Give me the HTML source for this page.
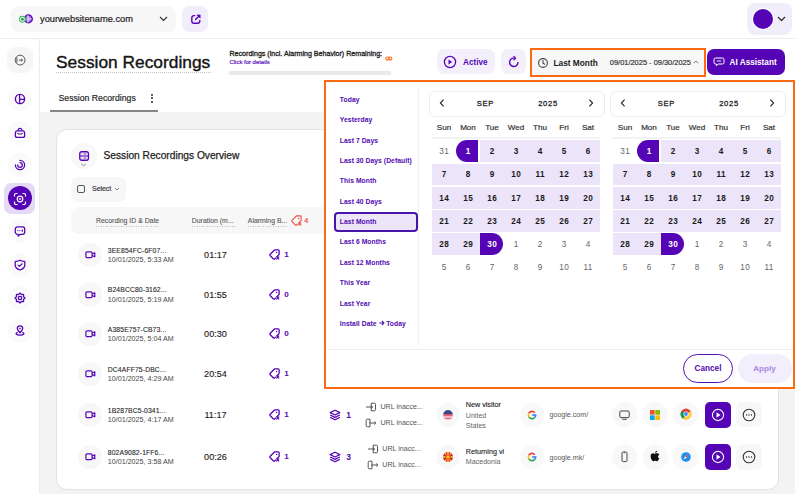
<!DOCTYPE html>
<html><head><meta charset="utf-8"><style>
html,body{margin:0;padding:0;}
body{width:795px;height:494px;overflow:hidden;position:relative;background:#fff;font-family:"Liberation Sans", sans-serif;}
</style></head><body>
<div style="position:absolute;left:0px;top:37.8px;width:795px;height:1px;background:#ebebeb"></div>
<div style="position:absolute;left:11px;top:6px;width:165px;height:26px;background:#f7f7f8;border-radius:8px"></div>
<svg style="position:absolute;left:17px;top:13px;" width="18" height="12" viewBox="0 0 18 12"><circle cx="11.4" cy="5.9" r="3.8" fill="#a678e8" stroke="#5605b6" stroke-width="1.5"/><line x1="11" y1="2.2" x2="11" y2="9.6" stroke="#fff" stroke-width="0.9"/><line x1="11" y1="5.9" x2="14.6" y2="5.9" stroke="#fff" stroke-width="0.8"/><circle cx="5.4" cy="6.3" r="2.9" fill="#fff" stroke="#3cc26a" stroke-width="1.1"/><circle cx="5.4" cy="6.3" r="1.35" fill="#1f8f45"/></svg>
<div style="position:absolute;left:40px;top:9.0px;line-height:20px;font-size:9.3px;font-weight:400;color:#222;white-space:nowrap;;-webkit-text-stroke:0.2px #222">yourwebsitename.com</div>
<svg style="position:absolute;left:159px;top:16px;" width="9" height="6" viewBox="0 0 9 6"><path d="M1 1 L4.5 4.5 L8 1" fill="none" stroke="#333" stroke-width="1.2"/></svg>
<div style="position:absolute;left:182.3px;top:6px;width:26px;height:26px;background:#f2edfb;border-radius:7px"></div>
<svg style="position:absolute;left:189.5px;top:13px;" width="12" height="12" viewBox="0 0 12 12"><path d="M4.8 2.6 H4 A2.2 2.2 0 0 0 1.8 4.8 V8 A2.2 2.2 0 0 0 4 10.2 H7.6 A2.2 2.2 0 0 0 9.8 8 V7.4" fill="none" stroke="#5605b6" stroke-width="1.4" stroke-linecap="round"/><path d="M5.6 6.4 L8.8 3.2" fill="none" stroke="#5605b6" stroke-width="1.4" stroke-linecap="round"/><path d="M6.9 1.9 L10.2 1.9 L10.2 5.2 Z" fill="#5605b6" stroke="#5605b6" stroke-width="0.6" stroke-linejoin="round"/></svg>
<div style="position:absolute;left:747px;top:3px;width:45px;height:32px;background:#f2edfb;border-radius:8px"></div>
<div style="position:absolute;left:752px;top:8px;width:22px;height:22px;border-radius:50%;background:#fff"></div>
<div style="position:absolute;left:753px;top:9px;width:20px;height:20px;border-radius:50%;background:#5605b6"></div>
<svg style="position:absolute;left:777px;top:16px;" width="9" height="6" viewBox="0 0 9 6"><path d="M1 1 L4.5 4.5 L8 1" fill="none" stroke="#333" stroke-width="1.3"/></svg>
<div style="position:absolute;left:39px;top:38px;width:1px;height:456px;background:#ebebeb"></div>
<div style="position:absolute;left:7px;top:47px;width:26px;height:26px;background:#f6f6f6;border-radius:8px"></div>
<svg style="position:absolute;left:13px;top:53px;" width="14" height="14" viewBox="0 0 14 14"><circle cx="7.1" cy="7.1" r="4.9" fill="none" stroke="#555" stroke-width="1"/><line x1="3.9" y1="4.6" x2="3.9" y2="9.6" stroke="#555" stroke-width="1"/><path d="M5.9 7.1 H9.5 M8.1 5.8 L9.5 7.1 L8.1 8.4" fill="none" stroke="#555" stroke-width="1"/></svg>
<div style="position:absolute;left:8px;top:87px;width:24px;height:24px;border-radius:50%;background:#fafafa"></div>
<div style="position:absolute;left:8px;top:120.5px;width:24px;height:24px;border-radius:50%;background:#fafafa"></div>
<div style="position:absolute;left:8px;top:152.7px;width:24px;height:24px;border-radius:50%;background:#fafafa"></div>
<div style="position:absolute;left:8px;top:218.6px;width:24px;height:24px;border-radius:50%;background:#fafafa"></div>
<div style="position:absolute;left:8px;top:252.60000000000002px;width:24px;height:24px;border-radius:50%;background:#fafafa"></div>
<div style="position:absolute;left:8px;top:285.7px;width:24px;height:24px;border-radius:50%;background:#fafafa"></div>
<div style="position:absolute;left:8px;top:319px;width:24px;height:24px;border-radius:50%;background:#fafafa"></div>
<svg style="position:absolute;left:13px;top:92px;" width="14" height="14" viewBox="0 0 14 14"><circle cx="7" cy="7" r="4.6" fill="none" stroke="#5605b6" stroke-width="1.4"/><path d="M6.6 2.4 V11.6 M6.6 7.3 H11.6" fill="none" stroke="#5605b6" stroke-width="1.3"/></svg>
<svg style="position:absolute;left:13px;top:125.5px;" width="14" height="14" viewBox="0 0 14 14"><path d="M4.2 4.8 H9.8 A1.8 1.8 0 0 1 11.5 6.3 L11.7 9.4 A2 2 0 0 1 9.7 11.4 H4.3 A2 2 0 0 1 2.3 9.4 L2.5 6.3 A1.8 1.8 0 0 1 4.2 4.8 Z" fill="none" stroke="#5605b6" stroke-width="1.3" stroke-linejoin="round"/><path d="M5.2 4.8 V4.2 A1.8 1.8 0 0 1 8.8 4.2 V4.8" fill="none" stroke="#5605b6" stroke-width="1.2"/><path d="M4.8 7.4 Q7 8.6 9.2 7.4" fill="none" stroke="#5605b6" stroke-width="1.1" stroke-linecap="round"/></svg>
<svg style="position:absolute;left:13px;top:157.7px;" width="14" height="14" viewBox="0 0 14 14"><path d="M7 2.4 A4.6 4.6 0 1 1 2.4 7" fill="none" stroke="#5605b6" stroke-width="1.3" stroke-linecap="round"/><path d="M7 4.7 A2.3 2.3 0 1 1 4.7 7" fill="none" stroke="#5605b6" stroke-width="1.3" stroke-linecap="round"/></svg>
<div style="position:absolute;left:4px;top:182.5px;width:31px;height:31px;background:#e5daf6;border-radius:7px"></div>
<div style="position:absolute;left:7.600000000000001px;top:186.10000000000002px;width:24.4px;height:24.4px;border-radius:50%;background:#5605b6"></div>
<svg style="position:absolute;left:13px;top:191.5px;" width="14" height="14" viewBox="0 0 14 14"><path d="M1.5 4.5 V3 A1.5 1.5 0 0 1 3 1.5 H4.5 M9.5 1.5 H11 A1.5 1.5 0 0 1 12.5 3 V4.5 M12.5 9.5 V11 A1.5 1.5 0 0 1 11 12.5 H9.5 M4.5 12.5 H3 A1.5 1.5 0 0 1 1.5 11 V9.5" fill="none" stroke="#fff" stroke-width="1.2"/><circle cx="7" cy="7" r="2.8" fill="none" stroke="#fff" stroke-width="1.2"/><circle cx="7" cy="7" r="0.9" fill="#fff"/></svg>
<svg style="position:absolute;left:13px;top:223.6px;" width="14" height="14" viewBox="0 0 14 14"><path d="M4.5 2.8 H9.5 A2.2 2.2 0 0 1 11.7 5 V8.1 A2.2 2.2 0 0 1 9.5 10.3 H7 L5.4 12 L5 10.3 H4.5 A2.2 2.2 0 0 1 2.3 8.1 V5 A2.2 2.2 0 0 1 4.5 2.8 Z" fill="none" stroke="#5605b6" stroke-width="1.3" stroke-linejoin="round"/><circle cx="4.9" cy="6.6" r="0.65" fill="#5605b6"/><path d="M6.3 6.6 H7.5" stroke="#5605b6" stroke-width="0.9"/><path d="M9.3 5.4 V7.8" stroke="#5605b6" stroke-width="1.2"/></svg>
<svg style="position:absolute;left:13px;top:257.6px;" width="14" height="14" viewBox="0 0 14 14"><path d="M7 2.2 C8.4 3.2 10 3.3 11.8 3.6 V7 C11.8 9.7 9.6 11.2 7 12 C4.4 11.2 2.2 9.7 2.2 7 V3.6 C4 3.3 5.6 3.2 7 2.2 Z" fill="none" stroke="#5605b6" stroke-width="1.3" stroke-linejoin="round"/><path d="M5 7.1 L6.4 8.4 L9.1 5.8" fill="none" stroke="#5605b6" stroke-width="1.2" stroke-linecap="round" stroke-linejoin="round"/></svg>
<svg style="position:absolute;left:13px;top:290.7px;" width="14" height="14" viewBox="0 0 14 14"><path d="M11.85 7.00 L11.77 7.31 L11.54 7.60 L11.22 7.84 L10.89 8.04 L10.62 8.23 L10.46 8.44 L10.43 8.69 L10.49 9.01 L10.58 9.39 L10.63 9.79 L10.59 10.15 L10.43 10.43 L10.15 10.59 L9.79 10.63 L9.39 10.58 L9.01 10.49 L8.69 10.43 L8.44 10.46 L8.23 10.62 L8.04 10.89 L7.84 11.22 L7.60 11.54 L7.31 11.77 L7.00 11.85 L6.69 11.77 L6.40 11.54 L6.16 11.22 L5.96 10.89 L5.77 10.62 L5.56 10.46 L5.31 10.43 L4.99 10.49 L4.61 10.58 L4.21 10.63 L3.85 10.59 L3.57 10.43 L3.41 10.15 L3.37 9.79 L3.42 9.39 L3.51 9.01 L3.57 8.69 L3.54 8.44 L3.38 8.23 L3.11 8.04 L2.78 7.84 L2.46 7.60 L2.23 7.31 L2.15 7.00 L2.23 6.69 L2.46 6.40 L2.78 6.16 L3.11 5.96 L3.38 5.77 L3.54 5.56 L3.57 5.31 L3.51 4.99 L3.42 4.61 L3.37 4.21 L3.41 3.85 L3.57 3.57 L3.85 3.41 L4.21 3.37 L4.61 3.42 L4.99 3.51 L5.31 3.57 L5.56 3.54 L5.77 3.38 L5.96 3.11 L6.16 2.78 L6.40 2.46 L6.69 2.23 L7.00 2.15 L7.31 2.23 L7.60 2.46 L7.84 2.78 L8.04 3.11 L8.23 3.38 L8.44 3.54 L8.69 3.57 L9.01 3.51 L9.39 3.42 L9.79 3.37 L10.15 3.41 L10.43 3.57 L10.59 3.85 L10.63 4.21 L10.58 4.61 L10.49 4.99 L10.43 5.31 L10.46 5.56 L10.62 5.77 L10.89 5.96 L11.22 6.16 L11.54 6.40 L11.77 6.69 L11.85 7.00 Z" fill="none" stroke="#5605b6" stroke-width="1.3" stroke-linejoin="round"/><circle cx="7" cy="7" r="1.7" fill="none" stroke="#5605b6" stroke-width="1.3"/></svg>
<svg style="position:absolute;left:13px;top:324px;" width="14" height="14" viewBox="0 0 14 14"><path d="M7 8.8 C5.5 7.3 4.3 6 4.3 4.6 A2.7 2.7 0 0 1 9.7 4.6 C9.7 6 8.5 7.3 7 8.8 Z" fill="none" stroke="#5605b6" stroke-width="1.3" stroke-linejoin="round"/><circle cx="7" cy="4.6" r="0.8" fill="#5605b6"/><path d="M4.2 8.6 C2.4 9.3 2.6 11.2 7 11.2 C11.4 11.2 11.6 9.3 9.8 8.6" fill="none" stroke="#5605b6" stroke-width="1.3" stroke-linecap="round"/></svg>
<div style="position:absolute;left:56px;top:52.4px;line-height:20px;font-size:17.35px;font-weight:400;color:#141414;white-space:nowrap;;-webkit-text-stroke:0.38px #141414">Session Recordings</div>
<div style="position:absolute;left:56px;top:71.5px;width:155px;height:1px;background-image:linear-gradient(to right,#c4c4c4 50%,transparent 50%);background-size:2px 1px"></div>
<div style="position:absolute;left:229.5px;top:44.1px;line-height:20px;font-size:7.1px;font-weight:400;color:#1e1e1e;white-space:nowrap;;-webkit-text-stroke:0.3px #1e1e1e">Recordings (incl. Alarming Behavior) Remaining:</div>
<div style="position:absolute;left:229.5px;top:52.2px;line-height:20px;font-size:5.95px;font-weight:400;color:#5a14c0;white-space:nowrap;;-webkit-text-stroke:0.2px #5a14c0">Click for details</div>
<div style="position:absolute;left:229px;top:71.2px;width:162px;height:4.2px;background:#e9e9e9;border-radius:1px"></div>
<svg style="position:absolute;left:384.5px;top:55.5px;" width="8" height="5" viewBox="0 0 8 5"><circle cx="2.4" cy="2.6" r="1.55" fill="none" stroke="#fb6a12" stroke-width="1.1"/><circle cx="5.3" cy="2.6" r="1.55" fill="none" stroke="#fb6a12" stroke-width="1.1"/></svg>
<div style="position:absolute;left:437px;top:49px;width:58px;height:25px;background:#f3effb;border-radius:7px"></div>
<svg style="position:absolute;left:443.2px;top:55px;" width="14" height="14" viewBox="0 0 14 14"><circle cx="7" cy="7" r="5.6" fill="none" stroke="#5605b6" stroke-width="1.3"/><path d="M5.5 4.6 L9.2 7 L5.5 9.4 Z" fill="#5605b6"/></svg>
<div style="position:absolute;left:463px;top:52.8px;line-height:20px;font-size:8.2px;font-weight:700;color:#5209b3;white-space:nowrap;">Active</div>
<div style="position:absolute;left:501px;top:49px;width:25px;height:25px;background:#f3effb;border-radius:7px"></div>
<svg style="position:absolute;left:507px;top:55px;" width="14" height="14" viewBox="0 0 14 14"><path d="M11 7.5 A4.2 4.2 0 1 1 7.2 3.1" fill="none" stroke="#5605b6" stroke-width="1.4" stroke-linecap="round"/><path d="M6.8 1.4 L8.6 3.1 L6.9 4.9" fill="none" stroke="#5605b6" stroke-width="1.3" stroke-linecap="round" stroke-linejoin="round"/></svg>
<div style="position:absolute;left:529.5px;top:48px;width:176px;height:28.8px;box-sizing:border-box;background:#f7f7f7;border:2.9px solid #fb6a12"></div>
<svg style="position:absolute;left:536px;top:55.5px;" width="14" height="14" viewBox="0 0 14 14"><circle cx="7" cy="7" r="4.4" fill="none" stroke="#444" stroke-width="1.1"/><path d="M7 4.6 V7.2 L8.7 8.2" fill="none" stroke="#444" stroke-width="1.1" stroke-linecap="round"/></svg>
<div style="position:absolute;left:553.5px;top:52.8px;line-height:20px;font-size:8.3px;font-weight:700;color:#1a1a1a;white-space:nowrap;">Last Month</div>
<div style="position:absolute;left:609.8px;top:53.0px;line-height:20px;font-size:7.45px;font-weight:400;color:#2a2a2a;white-space:nowrap;;-webkit-text-stroke:0.15px #2a2a2a">09/01/2025 - 09/30/2025</div>
<svg style="position:absolute;left:693px;top:60px;" width="6" height="4" viewBox="0 0 6 4"><path d="M0.8 3.2 L3 1 L5.2 3.2" fill="none" stroke="#555" stroke-width="0.8"/></svg>
<div style="position:absolute;left:707px;top:49px;width:78px;height:26px;background:#5605b6;border-radius:7px"></div>
<svg style="position:absolute;left:713px;top:57px;" width="12" height="10" viewBox="0 0 12 10"><path d="M2.6 1 H9.4 A1.6 1.6 0 0 1 11 2.6 V5.4 A1.6 1.6 0 0 1 9.4 7 H5.2 L3.4 8.8 V7 H2.6 A1.6 1.6 0 0 1 1 5.4 V2.6 A1.6 1.6 0 0 1 2.6 1 Z" fill="none" stroke="#fff" stroke-width="1" stroke-linejoin="round"/><path d="M3.8 4 H8.2" stroke="#fff" stroke-width="0.9"/></svg>
<div style="position:absolute;left:729.6px;top:53.0px;line-height:20px;font-size:8.2px;font-weight:700;color:#fff;white-space:nowrap;">AI Assistant</div>
<div style="position:absolute;left:58.5px;top:88.0px;line-height:20px;font-size:8.7px;font-weight:400;color:#2a2a2a;white-space:nowrap;;-webkit-text-stroke:0.2px #2a2a2a">Session Recordings</div>
<div style="position:absolute;left:150.85000000000002px;top:93.75px;width:1.9px;height:1.9px;border-radius:50%;background:#2a2a2a"></div>
<div style="position:absolute;left:150.85000000000002px;top:97.35px;width:1.9px;height:1.9px;border-radius:50%;background:#2a2a2a"></div>
<div style="position:absolute;left:150.85000000000002px;top:100.94999999999999px;width:1.9px;height:1.9px;border-radius:50%;background:#2a2a2a"></div>
<div style="position:absolute;left:50px;top:110.2px;width:108px;height:1.9px;background:#858585"></div>
<div style="position:absolute;left:40px;top:111.8px;width:755px;height:382.2px;background:#f3f3f3"></div>
<div style="position:absolute;left:55.9px;top:129.4px;width:723.3px;height:360.2px;box-sizing:border-box;background:#fff;border:1px solid #e3e3e3;border-radius:11px"></div>
<div style="position:absolute;left:71.0px;top:143.2px;width:25.6px;height:25.6px;border-radius:50%;background:#f8f8f8"></div>
<svg style="position:absolute;left:78.6px;top:150.6px;" width="11" height="11" viewBox="0 0 11 11"><rect x="0.75" y="0.75" width="8.7" height="8.5" rx="1.9" fill="none" stroke="#5605b6" stroke-width="1.3"/><line x1="0.75" y1="5" x2="9.45" y2="5" stroke="#5605b6" stroke-width="1.1"/><path d="M2.6 2.9 H3.3 M4.6 2.9 H7.4 M2.6 7.1 H3.3 M4.6 7.1 H7.4" stroke="#5605b6" stroke-width="0.8"/></svg>
<svg style="position:absolute;left:80.3px;top:162.5px;" width="7" height="4" viewBox="0 0 7 4"><path d="M1 0.8 L3.5 3 L6 0.8" fill="none" stroke="#777" stroke-width="0.8"/></svg>
<div style="position:absolute;left:103.5px;top:145.8px;line-height:20px;font-size:10.2px;font-weight:400;color:#1e1e1e;white-space:nowrap;;-webkit-text-stroke:0.25px #1e1e1e">Session Recordings Overview</div>
<div style="position:absolute;left:71px;top:176.5px;width:55px;height:25px;background:#f7f7f7;border-radius:7px"></div>
<div style="position:absolute;left:77.2px;top:185px;width:8.2px;height:8.2px;box-sizing:border-box;border:1.3px solid #555;border-radius:2px"></div>
<div style="position:absolute;left:92px;top:179.0px;line-height:20px;font-size:7.1px;font-weight:400;color:#3a3a3a;white-space:nowrap;letter-spacing:-0.1px;-webkit-text-stroke:0.18px #3a3a3a">Select</div>
<svg style="position:absolute;left:113.8px;top:186.6px;" width="6" height="4" viewBox="0 0 6 4"><path d="M1 1 L3 3 L5 1" fill="none" stroke="#666" stroke-width="0.8"/></svg>
<div style="position:absolute;left:71px;top:207px;width:720px;height:27px;background:#f7f7f7;border-radius:8px"></div>
<div style="position:absolute;left:96px;top:210.9px;line-height:20px;font-size:6.9px;font-weight:400;color:#555;white-space:nowrap;;-webkit-text-stroke:0.1px #555">Recording ID &amp; Date</div>
<div style="position:absolute;left:96px;top:225.6px;width:63px;height:1px;background-image:linear-gradient(to right,#b0b0b0 50%,transparent 50%);background-size:2.5px 1px"></div>
<div style="position:absolute;left:191.8px;top:210.9px;line-height:20px;font-size:6.9px;font-weight:400;color:#555;white-space:nowrap;;-webkit-text-stroke:0.1px #555">Duration (m...</div>
<div style="position:absolute;left:191.8px;top:225.6px;width:45.5px;height:1px;background-image:linear-gradient(to right,#b0b0b0 50%,transparent 50%);background-size:2.5px 1px"></div>
<div style="position:absolute;left:247.8px;top:210.9px;line-height:20px;font-size:6.9px;font-weight:400;color:#555;white-space:nowrap;;-webkit-text-stroke:0.1px #555">Alarming B...</div>
<div style="position:absolute;left:247.8px;top:225.6px;width:40px;height:1px;background-image:linear-gradient(to right,#b0b0b0 50%,transparent 50%);background-size:2.5px 1px"></div>
<svg style="position:absolute;left:291.2px;top:214.7px;" width="12" height="12" viewBox="0 0 12 12"><g transform="scale(0.46)"><path d="M11.414 2.586 A2 2 0 0 1 12.828 2 H20 A2 2 0 0 1 22 4 V11.172 A2 2 0 0 1 21.414 12.586 L17.5 16.5 M14 20 L12.71 21.29 A2.426 2.426 0 0 1 9.29 21.29 L2.71 14.71 A2.426 2.426 0 0 1 2.71 11.29 L11.414 2.586" fill="none" stroke="#ef4a45" stroke-width="2.4" stroke-linejoin="round" stroke-linecap="round"/><circle cx="16.5" cy="7.5" r="1.6" fill="#ef4a45"/><path d="M16.5 17 L21.5 22 M21.5 17 L16.5 22" stroke="#ef4a45" stroke-width="2.3" stroke-linecap="round"/></g></svg>
<div style="position:absolute;left:304.3px;top:210.6px;line-height:20px;font-size:7.4px;font-weight:400;color:#ef4a45;white-space:nowrap;;-webkit-text-stroke:0.2px #ef4a45">4</div>
<div style="position:absolute;left:77.5px;top:242.7px;width:24.6px;height:24.6px;border-radius:50%;background:#f7f7f7"></div>
<svg style="position:absolute;left:84.8px;top:251.4px;" width="11" height="8" viewBox="0 0 11 8"><rect x="0.9" y="0.9" width="6.2" height="5.8" rx="1.2" fill="none" stroke="#5605b6" stroke-width="1.2"/><path d="M7.1 3 L9.8 1.8 V5.8 L7.1 4.6" fill="none" stroke="#5605b6" stroke-width="1.2" stroke-linejoin="round"/></svg>
<div style="position:absolute;left:107.8px;top:240.7px;line-height:20px;font-size:6.8px;font-weight:400;color:#1e1e1e;white-space:nowrap;letter-spacing:0.12px;-webkit-text-stroke:0.1px #1e1e1e">3EE854FC-6F07...</div>
<div style="position:absolute;left:107.8px;top:250.39999999999998px;line-height:20px;font-size:7.15px;font-weight:400;color:#474747;white-space:nowrap;">10/01/2025, 5:33 AM</div>
<div style="position:absolute;left:195.5px;top:245.2px;width:40px;text-align:center;line-height:20px;font-size:9.1px;font-weight:400;color:#1a1a1a;white-space:nowrap;;-webkit-text-stroke:0.12px #1a1a1a">01:17</div>
<svg style="position:absolute;left:268.5px;top:249.4px;" width="12" height="12" viewBox="0 0 12 12"><g transform="scale(0.46)"><path d="M11.414 2.586 A2 2 0 0 1 12.828 2 H20 A2 2 0 0 1 22 4 V11.172 A2 2 0 0 1 21.414 12.586 L17.5 16.5 M14 20 L12.71 21.29 A2.426 2.426 0 0 1 9.29 21.29 L2.71 14.71 A2.426 2.426 0 0 1 2.71 11.29 L11.414 2.586" fill="none" stroke="#5605b6" stroke-width="2.8" stroke-linejoin="round" stroke-linecap="round"/><circle cx="16.5" cy="7.5" r="1.6" fill="#5605b6"/><path d="M16.5 17 L21.5 22 M21.5 17 L16.5 22" stroke="#5605b6" stroke-width="2.3" stroke-linecap="round"/></g></svg>
<div style="position:absolute;left:284.3px;top:245.2px;line-height:20px;font-size:8.1px;font-weight:700;color:#5209b3;white-space:nowrap;">1</div>
<div style="position:absolute;left:77.5px;top:282.2px;width:24.6px;height:24.6px;border-radius:50%;background:#f7f7f7"></div>
<svg style="position:absolute;left:84.8px;top:290.9px;" width="11" height="8" viewBox="0 0 11 8"><rect x="0.9" y="0.9" width="6.2" height="5.8" rx="1.2" fill="none" stroke="#5605b6" stroke-width="1.2"/><path d="M7.1 3 L9.8 1.8 V5.8 L7.1 4.6" fill="none" stroke="#5605b6" stroke-width="1.2" stroke-linejoin="round"/></svg>
<div style="position:absolute;left:107.8px;top:280.2px;line-height:20px;font-size:6.8px;font-weight:400;color:#1e1e1e;white-space:nowrap;letter-spacing:0.12px;-webkit-text-stroke:0.1px #1e1e1e">B24BCC80-3162...</div>
<div style="position:absolute;left:107.8px;top:289.9px;line-height:20px;font-size:7.15px;font-weight:400;color:#474747;white-space:nowrap;">10/01/2025, 5:19 AM</div>
<div style="position:absolute;left:195.5px;top:284.7px;width:40px;text-align:center;line-height:20px;font-size:9.1px;font-weight:400;color:#1a1a1a;white-space:nowrap;;-webkit-text-stroke:0.12px #1a1a1a">01:55</div>
<svg style="position:absolute;left:268.5px;top:288.9px;" width="12" height="12" viewBox="0 0 12 12"><g transform="scale(0.46)"><path d="M11.414 2.586 A2 2 0 0 1 12.828 2 H20 A2 2 0 0 1 22 4 V11.172 A2 2 0 0 1 21.414 12.586 L17.5 16.5 M14 20 L12.71 21.29 A2.426 2.426 0 0 1 9.29 21.29 L2.71 14.71 A2.426 2.426 0 0 1 2.71 11.29 L11.414 2.586" fill="none" stroke="#5605b6" stroke-width="2.8" stroke-linejoin="round" stroke-linecap="round"/><circle cx="16.5" cy="7.5" r="1.6" fill="#5605b6"/><path d="M16.5 17 L21.5 22 M21.5 17 L16.5 22" stroke="#5605b6" stroke-width="2.3" stroke-linecap="round"/></g></svg>
<div style="position:absolute;left:284.3px;top:284.7px;line-height:20px;font-size:8.1px;font-weight:700;color:#5209b3;white-space:nowrap;">0</div>
<div style="position:absolute;left:77.5px;top:321.7px;width:24.6px;height:24.6px;border-radius:50%;background:#f7f7f7"></div>
<svg style="position:absolute;left:84.8px;top:330.4px;" width="11" height="8" viewBox="0 0 11 8"><rect x="0.9" y="0.9" width="6.2" height="5.8" rx="1.2" fill="none" stroke="#5605b6" stroke-width="1.2"/><path d="M7.1 3 L9.8 1.8 V5.8 L7.1 4.6" fill="none" stroke="#5605b6" stroke-width="1.2" stroke-linejoin="round"/></svg>
<div style="position:absolute;left:107.8px;top:319.7px;line-height:20px;font-size:6.8px;font-weight:400;color:#1e1e1e;white-space:nowrap;letter-spacing:0.12px;-webkit-text-stroke:0.1px #1e1e1e">A385E757-CB73...</div>
<div style="position:absolute;left:107.8px;top:329.4px;line-height:20px;font-size:7.15px;font-weight:400;color:#474747;white-space:nowrap;">10/01/2025, 5:04 AM</div>
<div style="position:absolute;left:195.5px;top:324.2px;width:40px;text-align:center;line-height:20px;font-size:9.1px;font-weight:400;color:#1a1a1a;white-space:nowrap;;-webkit-text-stroke:0.12px #1a1a1a">00:30</div>
<svg style="position:absolute;left:268.5px;top:328.4px;" width="12" height="12" viewBox="0 0 12 12"><g transform="scale(0.46)"><path d="M11.414 2.586 A2 2 0 0 1 12.828 2 H20 A2 2 0 0 1 22 4 V11.172 A2 2 0 0 1 21.414 12.586 L17.5 16.5 M14 20 L12.71 21.29 A2.426 2.426 0 0 1 9.29 21.29 L2.71 14.71 A2.426 2.426 0 0 1 2.71 11.29 L11.414 2.586" fill="none" stroke="#5605b6" stroke-width="2.8" stroke-linejoin="round" stroke-linecap="round"/><circle cx="16.5" cy="7.5" r="1.6" fill="#5605b6"/><path d="M16.5 17 L21.5 22 M21.5 17 L16.5 22" stroke="#5605b6" stroke-width="2.3" stroke-linecap="round"/></g></svg>
<div style="position:absolute;left:284.3px;top:324.2px;line-height:20px;font-size:8.1px;font-weight:700;color:#5209b3;white-space:nowrap;">0</div>
<div style="position:absolute;left:77.5px;top:361.7px;width:24.6px;height:24.6px;border-radius:50%;background:#f7f7f7"></div>
<svg style="position:absolute;left:84.8px;top:370.4px;" width="11" height="8" viewBox="0 0 11 8"><rect x="0.9" y="0.9" width="6.2" height="5.8" rx="1.2" fill="none" stroke="#5605b6" stroke-width="1.2"/><path d="M7.1 3 L9.8 1.8 V5.8 L7.1 4.6" fill="none" stroke="#5605b6" stroke-width="1.2" stroke-linejoin="round"/></svg>
<div style="position:absolute;left:107.8px;top:359.7px;line-height:20px;font-size:6.8px;font-weight:400;color:#1e1e1e;white-space:nowrap;letter-spacing:0.12px;-webkit-text-stroke:0.1px #1e1e1e">DC4AFF75-DBC...</div>
<div style="position:absolute;left:107.8px;top:369.4px;line-height:20px;font-size:7.15px;font-weight:400;color:#474747;white-space:nowrap;">10/01/2025, 4:29 AM</div>
<div style="position:absolute;left:195.5px;top:364.2px;width:40px;text-align:center;line-height:20px;font-size:9.1px;font-weight:400;color:#1a1a1a;white-space:nowrap;;-webkit-text-stroke:0.12px #1a1a1a">20:54</div>
<svg style="position:absolute;left:268.5px;top:368.4px;" width="12" height="12" viewBox="0 0 12 12"><g transform="scale(0.46)"><path d="M11.414 2.586 A2 2 0 0 1 12.828 2 H20 A2 2 0 0 1 22 4 V11.172 A2 2 0 0 1 21.414 12.586 L17.5 16.5 M14 20 L12.71 21.29 A2.426 2.426 0 0 1 9.29 21.29 L2.71 14.71 A2.426 2.426 0 0 1 2.71 11.29 L11.414 2.586" fill="none" stroke="#5605b6" stroke-width="2.8" stroke-linejoin="round" stroke-linecap="round"/><circle cx="16.5" cy="7.5" r="1.6" fill="#5605b6"/><path d="M16.5 17 L21.5 22 M21.5 17 L16.5 22" stroke="#5605b6" stroke-width="2.3" stroke-linecap="round"/></g></svg>
<div style="position:absolute;left:284.3px;top:364.2px;line-height:20px;font-size:8.1px;font-weight:700;color:#5209b3;white-space:nowrap;">1</div>
<div style="position:absolute;left:77.5px;top:402.7px;width:24.6px;height:24.6px;border-radius:50%;background:#f7f7f7"></div>
<svg style="position:absolute;left:84.8px;top:411.4px;" width="11" height="8" viewBox="0 0 11 8"><rect x="0.9" y="0.9" width="6.2" height="5.8" rx="1.2" fill="none" stroke="#5605b6" stroke-width="1.2"/><path d="M7.1 3 L9.8 1.8 V5.8 L7.1 4.6" fill="none" stroke="#5605b6" stroke-width="1.2" stroke-linejoin="round"/></svg>
<div style="position:absolute;left:107.8px;top:400.7px;line-height:20px;font-size:6.8px;font-weight:400;color:#1e1e1e;white-space:nowrap;letter-spacing:0.12px;-webkit-text-stroke:0.1px #1e1e1e">1B287BC5-0341...</div>
<div style="position:absolute;left:107.8px;top:410.4px;line-height:20px;font-size:7.15px;font-weight:400;color:#474747;white-space:nowrap;">10/01/2025, 4:17 AM</div>
<div style="position:absolute;left:195.5px;top:405.2px;width:40px;text-align:center;line-height:20px;font-size:9.1px;font-weight:400;color:#1a1a1a;white-space:nowrap;;-webkit-text-stroke:0.12px #1a1a1a">11:17</div>
<svg style="position:absolute;left:268.5px;top:409.4px;" width="12" height="12" viewBox="0 0 12 12"><g transform="scale(0.46)"><path d="M11.414 2.586 A2 2 0 0 1 12.828 2 H20 A2 2 0 0 1 22 4 V11.172 A2 2 0 0 1 21.414 12.586 L17.5 16.5 M14 20 L12.71 21.29 A2.426 2.426 0 0 1 9.29 21.29 L2.71 14.71 A2.426 2.426 0 0 1 2.71 11.29 L11.414 2.586" fill="none" stroke="#5605b6" stroke-width="2.8" stroke-linejoin="round" stroke-linecap="round"/><circle cx="16.5" cy="7.5" r="1.6" fill="#5605b6"/><path d="M16.5 17 L21.5 22 M21.5 17 L16.5 22" stroke="#5605b6" stroke-width="2.3" stroke-linecap="round"/></g></svg>
<div style="position:absolute;left:284.3px;top:405.2px;line-height:20px;font-size:8.1px;font-weight:700;color:#5209b3;white-space:nowrap;">1</div>
<div style="position:absolute;left:77.5px;top:444.59999999999997px;width:24.6px;height:24.6px;border-radius:50%;background:#f7f7f7"></div>
<svg style="position:absolute;left:84.8px;top:453.29999999999995px;" width="11" height="8" viewBox="0 0 11 8"><rect x="0.9" y="0.9" width="6.2" height="5.8" rx="1.2" fill="none" stroke="#5605b6" stroke-width="1.2"/><path d="M7.1 3 L9.8 1.8 V5.8 L7.1 4.6" fill="none" stroke="#5605b6" stroke-width="1.2" stroke-linejoin="round"/></svg>
<div style="position:absolute;left:107.8px;top:442.59999999999997px;line-height:20px;font-size:6.8px;font-weight:400;color:#1e1e1e;white-space:nowrap;letter-spacing:0.12px;-webkit-text-stroke:0.1px #1e1e1e">802A9082-1FF6...</div>
<div style="position:absolute;left:107.8px;top:452.29999999999995px;line-height:20px;font-size:7.15px;font-weight:400;color:#474747;white-space:nowrap;">10/01/2025, 3:58 AM</div>
<div style="position:absolute;left:195.5px;top:447.09999999999997px;width:40px;text-align:center;line-height:20px;font-size:9.1px;font-weight:400;color:#1a1a1a;white-space:nowrap;;-webkit-text-stroke:0.12px #1a1a1a">00:26</div>
<svg style="position:absolute;left:268.5px;top:451.29999999999995px;" width="12" height="12" viewBox="0 0 12 12"><g transform="scale(0.46)"><path d="M11.414 2.586 A2 2 0 0 1 12.828 2 H20 A2 2 0 0 1 22 4 V11.172 A2 2 0 0 1 21.414 12.586 L17.5 16.5 M14 20 L12.71 21.29 A2.426 2.426 0 0 1 9.29 21.29 L2.71 14.71 A2.426 2.426 0 0 1 2.71 11.29 L11.414 2.586" fill="none" stroke="#5605b6" stroke-width="2.8" stroke-linejoin="round" stroke-linecap="round"/><circle cx="16.5" cy="7.5" r="1.6" fill="#5605b6"/><path d="M16.5 17 L21.5 22 M21.5 17 L16.5 22" stroke="#5605b6" stroke-width="2.3" stroke-linecap="round"/></g></svg>
<div style="position:absolute;left:284.3px;top:447.09999999999997px;line-height:20px;font-size:8.1px;font-weight:700;color:#5209b3;white-space:nowrap;">1</div>
<svg style="position:absolute;left:329px;top:408.5px;" width="12" height="12" viewBox="0 0 12 12"><path d="M6 1.2 L10.8 3.6 L6 6 L1.2 3.6 Z" fill="none" stroke="#5605b6" stroke-width="1.2" stroke-linejoin="round"/><path d="M1.2 6 L6 8.4 L10.8 6 M1.2 8.4 L6 10.8 L10.8 8.4" fill="none" stroke="#5605b6" stroke-width="1.2" stroke-linejoin="round"/></svg>
<div style="position:absolute;left:346.2px;top:404.8px;line-height:20px;font-size:8.5px;font-weight:700;color:#5209b3;white-space:nowrap;">1</div>
<svg style="position:absolute;left:365px;top:401.8px;" width="12" height="10" viewBox="0 0 12 10"><path d="M6.2 1.2 H9.4 A1.1 1.1 0 0 1 10.5 2.3 V7.7 A1.1 1.1 0 0 1 9.4 8.8 H6.2 V1.2 Z" fill="none" stroke="#444" stroke-width="0.9"/><path d="M1 5 H7.5 M5.9 3.5 L7.5 5 L5.9 6.5" fill="none" stroke="#444" stroke-width="0.9"/></svg>
<div style="position:absolute;left:380.5px;top:396.8px;line-height:20px;font-size:7.1px;font-weight:400;color:#555;white-space:nowrap;">URL inacce...</div>
<svg style="position:absolute;left:365px;top:418.3px;" width="12" height="10" viewBox="0 0 12 10"><path d="M5 1.2 H2.3 A1.1 1.1 0 0 0 1.2 2.3 V7.7 A1.1 1.1 0 0 0 2.3 8.8 H5 V1.2 Z" fill="none" stroke="#444" stroke-width="0.9"/><path d="M4.3 5 H10.8 M9.2 3.5 L10.8 5 L9.2 6.5" fill="none" stroke="#444" stroke-width="0.9"/></svg>
<div style="position:absolute;left:380.5px;top:413.3px;line-height:20px;font-size:7.1px;font-weight:400;color:#555;white-space:nowrap;">URL inacce...</div>
<div style="position:absolute;left:436.2px;top:402.5px;width:24px;height:24px;border-radius:50%;background:#f8f8f8"></div>
<svg style="position:absolute;left:442.2px;top:408.7px;" width="12" height="12" viewBox="0 0 12 12"><defs><clipPath id="cf1"><circle cx="6" cy="6" r="4.9"/></clipPath></defs><g clip-path="url(#cf1)"><rect x="0" y="0" width="12" height="12" fill="#fff"/><rect x="0" y="6.2" width="12" height="1.2" fill="#e0485c"/><rect x="0" y="8.6" width="12" height="1.2" fill="#e0485c"/><rect x="0" y="10.6" width="12" height="1.4" fill="#e0485c"/><rect x="0" y="0" width="12" height="5.6" fill="#3c4a8c"/><rect x="3" y="5" width="6" height="1" fill="#c44"/></g></svg>
<div style="position:absolute;left:465.8px;top:395.3px;line-height:20px;font-size:7.2px;font-weight:400;color:#222;white-space:nowrap;;-webkit-text-stroke:0.12px #222">New visitor</div>
<div style="position:absolute;left:465.8px;top:405.7px;line-height:20px;font-size:7.1px;font-weight:400;color:#666;white-space:nowrap;">United</div>
<div style="position:absolute;left:465.8px;top:415.7px;line-height:20px;font-size:7.1px;font-weight:400;color:#666;white-space:nowrap;">States</div>
<div style="position:absolute;left:520.2px;top:402.5px;width:24px;height:24px;border-radius:50%;background:#f8f8f8"></div>
<svg style="position:absolute;left:526.2px;top:408.7px;" width="12" height="12" viewBox="0 0 12 12"><path d="M6.1 6 H10.3" stroke="#4285f4" stroke-width="1.7"/><path d="M9.6 6 A3.6 3.6 0 0 1 8.55 8.55" fill="none" stroke="#4285f4" stroke-width="1.7"/><path d="M8.55 8.55 A3.6 3.6 0 0 1 2.88 7.8" fill="none" stroke="#34a853" stroke-width="1.7"/><path d="M2.88 7.8 A3.6 3.6 0 0 1 2.88 4.2" fill="none" stroke="#fbbc05" stroke-width="1.7"/><path d="M2.88 4.2 A3.6 3.6 0 0 1 8.76 3.69" fill="none" stroke="#ea4335" stroke-width="1.7"/></svg>
<div style="position:absolute;left:549.5px;top:405.3px;line-height:20px;font-size:7.1px;font-weight:400;color:#555;white-space:nowrap;">google.com/</div>
<div style="position:absolute;left:611.6999999999999px;top:401.8px;width:25.4px;height:25.4px;border-radius:50%;background:#f8f8f8"></div>
<div style="position:absolute;left:642.5px;top:401.8px;width:25.4px;height:25.4px;border-radius:50%;background:#f8f8f8"></div>
<div style="position:absolute;left:673.0px;top:401.8px;width:25.4px;height:25.4px;border-radius:50%;background:#f8f8f8"></div>
<svg style="position:absolute;left:618px;top:408.5px;" width="13" height="12" viewBox="0 0 13 12"><rect x="1.8" y="2" width="9.4" height="6.6" rx="1.2" fill="none" stroke="#444" stroke-width="1"/><path d="M4.3 10.3 H8.7" stroke="#444" stroke-width="1"/></svg>
<svg style="position:absolute;left:649px;top:408.5px;" width="12" height="12" viewBox="0 0 12 12"><rect x="1" y="1" width="4.7" height="4.7" fill="#f35325"/><rect x="6.3" y="1" width="4.7" height="4.7" fill="#81bc06"/><rect x="1" y="6.3" width="4.7" height="4.7" fill="#05a6f0"/><rect x="6.3" y="6.3" width="4.7" height="4.7" fill="#ffba08"/></svg>
<svg style="position:absolute;left:679.7px;top:408.3px;" width="12" height="12" viewBox="0 0 12 12"><circle cx="6" cy="6" r="5.4" fill="#db4437"/><path d="M6 6 L1.32 3.3 A5.4 5.4 0 0 0 3.3 10.68 Z" fill="#0f9d58"/><path d="M6 6 L10.68 3.3 A5.4 5.4 0 0 1 3.3 10.68 Z" fill="#ffcd40"/><circle cx="6" cy="6" r="2.5" fill="#fff"/><circle cx="6" cy="6" r="1.9" fill="#4285f4"/></svg>
<div style="position:absolute;left:705px;top:401.5px;width:26px;height:26px;background:#5605b6;border-radius:5px"></div>
<svg style="position:absolute;left:711px;top:407.5px;" width="14" height="14" viewBox="0 0 14 14"><circle cx="7" cy="7" r="5.6" fill="none" stroke="#fff" stroke-width="1.1"/><path d="M5.5 4.3 L9.5 7 L5.5 9.7 Z" fill="#fff"/></svg>
<div style="position:absolute;left:736.3px;top:401.7px;width:26px;height:25.6px;background:#f7f7f7;border-radius:7px"></div>
<svg style="position:absolute;left:742.3px;top:407.5px;" width="14" height="14" viewBox="0 0 14 14"><circle cx="7" cy="7" r="5.8" fill="none" stroke="#333" stroke-width="1.1"/><circle cx="4.6" cy="7" r="0.7" fill="#333"/><circle cx="7" cy="7" r="0.7" fill="#333"/><circle cx="9.4" cy="7" r="0.7" fill="#333"/></svg>
<svg style="position:absolute;left:329px;top:450.9px;" width="12" height="12" viewBox="0 0 12 12"><path d="M6 1.2 L10.8 3.6 L6 6 L1.2 3.6 Z" fill="none" stroke="#5605b6" stroke-width="1.2" stroke-linejoin="round"/><path d="M1.2 6 L6 8.4 L10.8 6 M1.2 8.4 L6 10.8 L10.8 8.4" fill="none" stroke="#5605b6" stroke-width="1.2" stroke-linejoin="round"/></svg>
<div style="position:absolute;left:346.2px;top:447.2px;line-height:20px;font-size:8.5px;font-weight:700;color:#5209b3;white-space:nowrap;">3</div>
<svg style="position:absolute;left:366.8px;top:443.79999999999995px;" width="12" height="10" viewBox="0 0 12 10"><path d="M6.2 1.2 H9.4 A1.1 1.1 0 0 1 10.5 2.3 V7.7 A1.1 1.1 0 0 1 9.4 8.8 H6.2 V1.2 Z" fill="none" stroke="#444" stroke-width="0.9"/><path d="M1 5 H7.5 M5.9 3.5 L7.5 5 L5.9 6.5" fill="none" stroke="#444" stroke-width="0.9"/></svg>
<div style="position:absolute;left:382.3px;top:438.79999999999995px;line-height:20px;font-size:7.1px;font-weight:400;color:#555;white-space:nowrap;">URL inacc...</div>
<svg style="position:absolute;left:366.8px;top:460.09999999999997px;" width="12" height="10" viewBox="0 0 12 10"><path d="M5 1.2 H2.3 A1.1 1.1 0 0 0 1.2 2.3 V7.7 A1.1 1.1 0 0 0 2.3 8.8 H5 V1.2 Z" fill="none" stroke="#444" stroke-width="0.9"/><path d="M4.3 5 H10.8 M9.2 3.5 L10.8 5 L9.2 6.5" fill="none" stroke="#444" stroke-width="0.9"/></svg>
<div style="position:absolute;left:382.3px;top:455.09999999999997px;line-height:20px;font-size:7.1px;font-weight:400;color:#555;white-space:nowrap;">URL inacc...</div>
<div style="position:absolute;left:436.2px;top:444.9px;width:24px;height:24px;border-radius:50%;background:#f8f8f8"></div>
<svg style="position:absolute;left:442.2px;top:451.09999999999997px;" width="12" height="12" viewBox="0 0 12 12"><defs><clipPath id="cf2"><circle cx="6" cy="6" r="5"/></clipPath></defs><g clip-path="url(#cf2)"><rect x="0" y="0" width="12" height="12" fill="#d8202a"/><path d="M6 6 L0 0 H2.5 Z M6 6 L12 0 H9.5 Z M6 6 L0 12 H2.5 Z M6 6 L12 12 H9.5 Z M6 6 L4.8 0 H7.2 Z M6 6 L4.8 12 H7.2 Z M6 6 L0 4.8 V7.2 Z M6 6 L12 4.8 V7.2 Z" fill="#f8d12e"/><circle cx="6" cy="6" r="2" fill="#f8d12e" stroke="#d8202a" stroke-width="0.6"/></g></svg>
<div style="position:absolute;left:465.8px;top:441.9px;line-height:20px;font-size:7.2px;font-weight:400;color:#222;white-space:nowrap;overflow:hidden;width:41.5px;-webkit-text-stroke:0.12px #222">Returning vi</div>
<div style="position:absolute;left:465.8px;top:452.09999999999997px;line-height:20px;font-size:7.1px;font-weight:400;color:#666;white-space:nowrap;">Macedonia</div>
<div style="position:absolute;left:520.2px;top:444.9px;width:24px;height:24px;border-radius:50%;background:#f8f8f8"></div>
<svg style="position:absolute;left:526.2px;top:451.09999999999997px;" width="12" height="12" viewBox="0 0 12 12"><path d="M6.1 6 H10.3" stroke="#4285f4" stroke-width="1.7"/><path d="M9.6 6 A3.6 3.6 0 0 1 8.55 8.55" fill="none" stroke="#4285f4" stroke-width="1.7"/><path d="M8.55 8.55 A3.6 3.6 0 0 1 2.88 7.8" fill="none" stroke="#34a853" stroke-width="1.7"/><path d="M2.88 7.8 A3.6 3.6 0 0 1 2.88 4.2" fill="none" stroke="#fbbc05" stroke-width="1.7"/><path d="M2.88 4.2 A3.6 3.6 0 0 1 8.76 3.69" fill="none" stroke="#ea4335" stroke-width="1.7"/></svg>
<div style="position:absolute;left:549.5px;top:447.7px;line-height:20px;font-size:7.1px;font-weight:400;color:#555;white-space:nowrap;">google.mk/</div>
<div style="position:absolute;left:611.6999999999999px;top:444.2px;width:25.4px;height:25.4px;border-radius:50%;background:#f8f8f8"></div>
<div style="position:absolute;left:642.5px;top:444.2px;width:25.4px;height:25.4px;border-radius:50%;background:#f8f8f8"></div>
<div style="position:absolute;left:673.0px;top:444.2px;width:25.4px;height:25.4px;border-radius:50%;background:#f8f8f8"></div>
<svg style="position:absolute;left:618px;top:449.9px;" width="13" height="14" viewBox="0 0 13 14"><rect x="4" y="2" width="5" height="9.6" rx="1.2" fill="none" stroke="#444" stroke-width="1"/><path d="M5.8 2.8 H7.2" stroke="#444" stroke-width="0.8"/></svg>
<svg style="position:absolute;left:648.6px;top:450.09999999999997px;" width="12" height="12" viewBox="0 0 12 12"><g transform="translate(6 6) scale(1.12) translate(-5.6 -5.6)"><path d="M8.3 6.4 C8.3 5 9.4 4.4 9.5 4.3 C8.8 3.3 7.8 3.2 7.4 3.2 C6.6 3.1 5.8 3.7 5.4 3.7 C5 3.7 4.4 3.2 3.7 3.2 C2.8 3.2 1.7 4 1.7 5.8 C1.7 6.9 2.1 8.1 2.6 8.9 C3.1 9.6 3.5 10.2 4.1 10.2 C4.7 10.2 4.9 9.8 5.7 9.8 C6.4 9.8 6.6 10.2 7.3 10.2 C7.9 10.2 8.3 9.6 8.8 8.9 C9.2 8.3 9.4 7.7 9.5 7.6 C9.4 7.6 8.3 7.2 8.3 6.4 Z M7 2.3 C7.3 1.9 7.5 1.4 7.5 0.9 C7 0.9 6.5 1.2 6.2 1.6 C5.9 1.9 5.6 2.4 5.7 2.9 C6.2 2.9 6.7 2.7 7 2.3 Z" fill="#111"/></g></svg>
<svg style="position:absolute;left:679.7px;top:450.9px;" width="12" height="12" viewBox="0 0 12 12"><circle cx="6" cy="6" r="4.8" fill="#1e90f0"/><path d="M8.6 3.4 L6.7 6.7 L3.4 8.6 L5.3 5.3 Z" fill="#fff"/><path d="M8.6 3.4 L6.7 6.7 L5.3 5.3 Z" fill="#e6342a"/></svg>
<div style="position:absolute;left:705px;top:443.9px;width:26px;height:26px;background:#5605b6;border-radius:5px"></div>
<svg style="position:absolute;left:711px;top:449.9px;" width="14" height="14" viewBox="0 0 14 14"><circle cx="7" cy="7" r="5.6" fill="none" stroke="#fff" stroke-width="1.1"/><path d="M5.5 4.3 L9.5 7 L5.5 9.7 Z" fill="#fff"/></svg>
<div style="position:absolute;left:736.3px;top:444.09999999999997px;width:26px;height:25.6px;background:#f7f7f7;border-radius:7px"></div>
<svg style="position:absolute;left:742.3px;top:449.9px;" width="14" height="14" viewBox="0 0 14 14"><circle cx="7" cy="7" r="5.8" fill="none" stroke="#333" stroke-width="1.1"/><circle cx="4.6" cy="7" r="0.7" fill="#333"/><circle cx="7" cy="7" r="0.7" fill="#333"/><circle cx="9.4" cy="7" r="0.7" fill="#333"/></svg>
<div style="position:absolute;left:324px;top:80px;width:471px;height:309px;box-sizing:border-box;background:#fff;border:2.9px solid #fb6a12"></div>
<div style="position:absolute;left:418px;top:88px;width:1px;height:257px;background:#f0f0f0"></div>
<div style="position:absolute;left:333.6px;top:211.6px;width:84.5px;height:20.5px;box-sizing:border-box;background:#ede6f9;border:2px solid #4a14a8;border-radius:4px"></div>
<div style="position:absolute;left:339.8px;top:89.8px;line-height:20px;font-size:6.75px;font-weight:700;color:#5209b3;white-space:nowrap;letter-spacing:0.07px">Today</div>
<div style="position:absolute;left:339.8px;top:110.17999999999999px;line-height:20px;font-size:6.75px;font-weight:700;color:#5209b3;white-space:nowrap;letter-spacing:0.07px">Yesterday</div>
<div style="position:absolute;left:339.8px;top:130.56px;line-height:20px;font-size:6.75px;font-weight:700;color:#5209b3;white-space:nowrap;letter-spacing:0.07px">Last 7 Days</div>
<div style="position:absolute;left:339.8px;top:150.94px;line-height:20px;font-size:6.75px;font-weight:700;color:#5209b3;white-space:nowrap;letter-spacing:0.07px">Last 30 Days (Default)</div>
<div style="position:absolute;left:339.8px;top:171.32px;line-height:20px;font-size:6.75px;font-weight:700;color:#5209b3;white-space:nowrap;letter-spacing:0.07px">This Month</div>
<div style="position:absolute;left:339.8px;top:191.7px;line-height:20px;font-size:6.75px;font-weight:700;color:#5209b3;white-space:nowrap;letter-spacing:0.07px">Last 40 Days</div>
<div style="position:absolute;left:339.8px;top:212.07999999999998px;line-height:20px;font-size:6.75px;font-weight:700;color:#5209b3;white-space:nowrap;letter-spacing:0.07px">Last Month</div>
<div style="position:absolute;left:339.8px;top:232.45999999999998px;line-height:20px;font-size:6.75px;font-weight:700;color:#5209b3;white-space:nowrap;letter-spacing:0.07px">Last 6 Months</div>
<div style="position:absolute;left:339.8px;top:252.83999999999997px;line-height:20px;font-size:6.75px;font-weight:700;color:#5209b3;white-space:nowrap;letter-spacing:0.07px">Last 12 Months</div>
<div style="position:absolute;left:339.8px;top:273.21999999999997px;line-height:20px;font-size:6.75px;font-weight:700;color:#5209b3;white-space:nowrap;letter-spacing:0.07px">This Year</div>
<div style="position:absolute;left:339.8px;top:293.59999999999997px;line-height:20px;font-size:6.75px;font-weight:700;color:#5209b3;white-space:nowrap;letter-spacing:0.07px">Last Year</div>
<div style="position:absolute;left:339.8px;top:313.97999999999996px;line-height:20px;font-size:6.75px;font-weight:700;color:#5209b3;white-space:nowrap;letter-spacing:0.07px">Install Date <svg width="5.6" height="6" viewBox="0 0 5.6 6" style="vertical-align:0px;margin:0 1.6px 0 0.4px"><path d="M0.3 3 H5 M2.9 0.9 L5 3 L2.9 5.1" fill="none" stroke="#5312b2" stroke-width="1.1"/></svg>Today</div>
<div style="position:absolute;left:429px;top:90.5px;width:175.5px;height:26px;box-sizing:border-box;border:1px solid #ededed;border-radius:6px;background:#fff"></div>
<svg style="position:absolute;left:438px;top:98px;" width="8" height="10" viewBox="0 0 8 10"><path d="M5.6 1.6 L2.4 5 L5.6 8.4" fill="none" stroke="#222" stroke-width="1.1"/></svg>
<svg style="position:absolute;left:586.5px;top:98px;" width="8" height="10" viewBox="0 0 8 10"><path d="M2.4 1.6 L5.6 5 L2.4 8.4" fill="none" stroke="#222" stroke-width="1.1"/></svg>
<div style="position:absolute;left:465.3px;top:93.6px;width:40px;text-align:center;line-height:20px;font-size:7.5px;font-weight:400;color:#1e1e1e;white-space:nowrap;letter-spacing:0.7px;-webkit-text-stroke:0.28px #1e1e1e">SEP</div>
<div style="position:absolute;left:528.0px;top:93.6px;width:40px;text-align:center;line-height:20px;font-size:7.6px;font-weight:400;color:#1e1e1e;white-space:nowrap;letter-spacing:0.7px;-webkit-text-stroke:0.28px #1e1e1e">2025</div>
<div style="position:absolute;left:429.0px;top:118.1px;width:30px;text-align:center;line-height:20px;font-size:8.1px;font-weight:400;color:#333;white-space:nowrap;;-webkit-text-stroke:0.2px #333">Sun</div>
<div style="position:absolute;left:453.0px;top:118.1px;width:30px;text-align:center;line-height:20px;font-size:8.1px;font-weight:400;color:#333;white-space:nowrap;;-webkit-text-stroke:0.2px #333">Mon</div>
<div style="position:absolute;left:477.0px;top:118.1px;width:30px;text-align:center;line-height:20px;font-size:8.1px;font-weight:400;color:#333;white-space:nowrap;;-webkit-text-stroke:0.2px #333">Tue</div>
<div style="position:absolute;left:501.0px;top:118.1px;width:30px;text-align:center;line-height:20px;font-size:8.1px;font-weight:400;color:#333;white-space:nowrap;;-webkit-text-stroke:0.2px #333">Wed</div>
<div style="position:absolute;left:525.0px;top:118.1px;width:30px;text-align:center;line-height:20px;font-size:8.1px;font-weight:400;color:#333;white-space:nowrap;;-webkit-text-stroke:0.2px #333">Thu</div>
<div style="position:absolute;left:549.0px;top:118.1px;width:30px;text-align:center;line-height:20px;font-size:8.1px;font-weight:400;color:#333;white-space:nowrap;;-webkit-text-stroke:0.2px #333">Fri</div>
<div style="position:absolute;left:573.0px;top:118.1px;width:30px;text-align:center;line-height:20px;font-size:8.1px;font-weight:400;color:#333;white-space:nowrap;;-webkit-text-stroke:0.2px #333">Sat</div>
<div style="position:absolute;left:432px;top:137.1px;width:168px;height:1.5px;background:#f3f3f3"></div>
<div style="position:absolute;left:480px;top:140.2px;width:120px;height:21.8px;background:#ece4f8"></div>
<div style="position:absolute;left:456px;top:140.2px;width:22.2px;height:21.8px;background:#5605b6;border-radius:11px 0 0 11px"></div>
<div style="position:absolute;left:432.0px;top:142.0px;width:24px;text-align:center;line-height:20px;font-size:8.2px;font-weight:400;color:#666;white-space:nowrap;letter-spacing:0.3px;text-indent:0.3px">31</div>
<div style="position:absolute;left:456.0px;top:142.0px;width:24px;text-align:center;line-height:20px;font-size:8.2px;font-weight:700;color:#fff;white-space:nowrap;letter-spacing:0.3px;text-indent:0.3px">1</div>
<div style="position:absolute;left:480.0px;top:142.0px;width:24px;text-align:center;line-height:20px;font-size:8.2px;font-weight:700;color:#1a1a1a;white-space:nowrap;letter-spacing:0.3px;text-indent:0.3px">2</div>
<div style="position:absolute;left:504.0px;top:142.0px;width:24px;text-align:center;line-height:20px;font-size:8.2px;font-weight:700;color:#1a1a1a;white-space:nowrap;letter-spacing:0.3px;text-indent:0.3px">3</div>
<div style="position:absolute;left:528.0px;top:142.0px;width:24px;text-align:center;line-height:20px;font-size:8.2px;font-weight:700;color:#1a1a1a;white-space:nowrap;letter-spacing:0.3px;text-indent:0.3px">4</div>
<div style="position:absolute;left:552.0px;top:142.0px;width:24px;text-align:center;line-height:20px;font-size:8.2px;font-weight:700;color:#1a1a1a;white-space:nowrap;letter-spacing:0.3px;text-indent:0.3px">5</div>
<div style="position:absolute;left:576.0px;top:142.0px;width:24px;text-align:center;line-height:20px;font-size:8.2px;font-weight:700;color:#1a1a1a;white-space:nowrap;letter-spacing:0.3px;text-indent:0.3px">6</div>
<div style="position:absolute;left:432px;top:163.6px;width:168px;height:21.8px;background:#ece4f8"></div>
<div style="position:absolute;left:432.0px;top:165.4px;width:24px;text-align:center;line-height:20px;font-size:8.2px;font-weight:700;color:#1a1a1a;white-space:nowrap;letter-spacing:0.3px;text-indent:0.3px">7</div>
<div style="position:absolute;left:456.0px;top:165.4px;width:24px;text-align:center;line-height:20px;font-size:8.2px;font-weight:700;color:#1a1a1a;white-space:nowrap;letter-spacing:0.3px;text-indent:0.3px">8</div>
<div style="position:absolute;left:480.0px;top:165.4px;width:24px;text-align:center;line-height:20px;font-size:8.2px;font-weight:700;color:#1a1a1a;white-space:nowrap;letter-spacing:0.3px;text-indent:0.3px">9</div>
<div style="position:absolute;left:504.0px;top:165.4px;width:24px;text-align:center;line-height:20px;font-size:8.2px;font-weight:700;color:#1a1a1a;white-space:nowrap;letter-spacing:0.3px;text-indent:0.3px">10</div>
<div style="position:absolute;left:528.0px;top:165.4px;width:24px;text-align:center;line-height:20px;font-size:8.2px;font-weight:700;color:#1a1a1a;white-space:nowrap;letter-spacing:0.3px;text-indent:0.3px">11</div>
<div style="position:absolute;left:552.0px;top:165.4px;width:24px;text-align:center;line-height:20px;font-size:8.2px;font-weight:700;color:#1a1a1a;white-space:nowrap;letter-spacing:0.3px;text-indent:0.3px">12</div>
<div style="position:absolute;left:576.0px;top:165.4px;width:24px;text-align:center;line-height:20px;font-size:8.2px;font-weight:700;color:#1a1a1a;white-space:nowrap;letter-spacing:0.3px;text-indent:0.3px">13</div>
<div style="position:absolute;left:432px;top:187px;width:168px;height:21.8px;background:#ece4f8"></div>
<div style="position:absolute;left:432.0px;top:188.8px;width:24px;text-align:center;line-height:20px;font-size:8.2px;font-weight:700;color:#1a1a1a;white-space:nowrap;letter-spacing:0.3px;text-indent:0.3px">14</div>
<div style="position:absolute;left:456.0px;top:188.8px;width:24px;text-align:center;line-height:20px;font-size:8.2px;font-weight:700;color:#1a1a1a;white-space:nowrap;letter-spacing:0.3px;text-indent:0.3px">15</div>
<div style="position:absolute;left:480.0px;top:188.8px;width:24px;text-align:center;line-height:20px;font-size:8.2px;font-weight:700;color:#1a1a1a;white-space:nowrap;letter-spacing:0.3px;text-indent:0.3px">16</div>
<div style="position:absolute;left:504.0px;top:188.8px;width:24px;text-align:center;line-height:20px;font-size:8.2px;font-weight:700;color:#1a1a1a;white-space:nowrap;letter-spacing:0.3px;text-indent:0.3px">17</div>
<div style="position:absolute;left:528.0px;top:188.8px;width:24px;text-align:center;line-height:20px;font-size:8.2px;font-weight:700;color:#1a1a1a;white-space:nowrap;letter-spacing:0.3px;text-indent:0.3px">18</div>
<div style="position:absolute;left:552.0px;top:188.8px;width:24px;text-align:center;line-height:20px;font-size:8.2px;font-weight:700;color:#1a1a1a;white-space:nowrap;letter-spacing:0.3px;text-indent:0.3px">19</div>
<div style="position:absolute;left:576.0px;top:188.8px;width:24px;text-align:center;line-height:20px;font-size:8.2px;font-weight:700;color:#1a1a1a;white-space:nowrap;letter-spacing:0.3px;text-indent:0.3px">20</div>
<div style="position:absolute;left:432px;top:210.4px;width:168px;height:21.8px;background:#ece4f8"></div>
<div style="position:absolute;left:432.0px;top:212.20000000000002px;width:24px;text-align:center;line-height:20px;font-size:8.2px;font-weight:700;color:#1a1a1a;white-space:nowrap;letter-spacing:0.3px;text-indent:0.3px">21</div>
<div style="position:absolute;left:456.0px;top:212.20000000000002px;width:24px;text-align:center;line-height:20px;font-size:8.2px;font-weight:700;color:#1a1a1a;white-space:nowrap;letter-spacing:0.3px;text-indent:0.3px">22</div>
<div style="position:absolute;left:480.0px;top:212.20000000000002px;width:24px;text-align:center;line-height:20px;font-size:8.2px;font-weight:700;color:#1a1a1a;white-space:nowrap;letter-spacing:0.3px;text-indent:0.3px">23</div>
<div style="position:absolute;left:504.0px;top:212.20000000000002px;width:24px;text-align:center;line-height:20px;font-size:8.2px;font-weight:700;color:#1a1a1a;white-space:nowrap;letter-spacing:0.3px;text-indent:0.3px">24</div>
<div style="position:absolute;left:528.0px;top:212.20000000000002px;width:24px;text-align:center;line-height:20px;font-size:8.2px;font-weight:700;color:#1a1a1a;white-space:nowrap;letter-spacing:0.3px;text-indent:0.3px">25</div>
<div style="position:absolute;left:552.0px;top:212.20000000000002px;width:24px;text-align:center;line-height:20px;font-size:8.2px;font-weight:700;color:#1a1a1a;white-space:nowrap;letter-spacing:0.3px;text-indent:0.3px">26</div>
<div style="position:absolute;left:576.0px;top:212.20000000000002px;width:24px;text-align:center;line-height:20px;font-size:8.2px;font-weight:700;color:#1a1a1a;white-space:nowrap;letter-spacing:0.3px;text-indent:0.3px">27</div>
<div style="position:absolute;left:432px;top:233.3px;width:48px;height:21.8px;background:#ece4f8"></div>
<div style="position:absolute;left:480px;top:233.3px;width:22.5px;height:21.8px;background:#5605b6;border-radius:0 11px 11px 0"></div>
<div style="position:absolute;left:432.0px;top:235.10000000000002px;width:24px;text-align:center;line-height:20px;font-size:8.2px;font-weight:700;color:#1a1a1a;white-space:nowrap;letter-spacing:0.3px;text-indent:0.3px">28</div>
<div style="position:absolute;left:456.0px;top:235.10000000000002px;width:24px;text-align:center;line-height:20px;font-size:8.2px;font-weight:700;color:#1a1a1a;white-space:nowrap;letter-spacing:0.3px;text-indent:0.3px">29</div>
<div style="position:absolute;left:480.0px;top:235.10000000000002px;width:24px;text-align:center;line-height:20px;font-size:8.2px;font-weight:700;color:#fff;white-space:nowrap;letter-spacing:0.3px;text-indent:0.3px">30</div>
<div style="position:absolute;left:504.0px;top:235.10000000000002px;width:24px;text-align:center;line-height:20px;font-size:8.2px;font-weight:400;color:#666;white-space:nowrap;letter-spacing:0.3px;text-indent:0.3px">1</div>
<div style="position:absolute;left:528.0px;top:235.10000000000002px;width:24px;text-align:center;line-height:20px;font-size:8.2px;font-weight:400;color:#666;white-space:nowrap;letter-spacing:0.3px;text-indent:0.3px">2</div>
<div style="position:absolute;left:552.0px;top:235.10000000000002px;width:24px;text-align:center;line-height:20px;font-size:8.2px;font-weight:400;color:#666;white-space:nowrap;letter-spacing:0.3px;text-indent:0.3px">3</div>
<div style="position:absolute;left:576.0px;top:235.10000000000002px;width:24px;text-align:center;line-height:20px;font-size:8.2px;font-weight:400;color:#666;white-space:nowrap;letter-spacing:0.3px;text-indent:0.3px">4</div>
<div style="position:absolute;left:432.0px;top:258.3px;width:24px;text-align:center;line-height:20px;font-size:8.2px;font-weight:400;color:#666;white-space:nowrap;letter-spacing:0.3px;text-indent:0.3px">5</div>
<div style="position:absolute;left:456.0px;top:258.3px;width:24px;text-align:center;line-height:20px;font-size:8.2px;font-weight:400;color:#666;white-space:nowrap;letter-spacing:0.3px;text-indent:0.3px">6</div>
<div style="position:absolute;left:480.0px;top:258.3px;width:24px;text-align:center;line-height:20px;font-size:8.2px;font-weight:400;color:#666;white-space:nowrap;letter-spacing:0.3px;text-indent:0.3px">7</div>
<div style="position:absolute;left:504.0px;top:258.3px;width:24px;text-align:center;line-height:20px;font-size:8.2px;font-weight:400;color:#666;white-space:nowrap;letter-spacing:0.3px;text-indent:0.3px">8</div>
<div style="position:absolute;left:528.0px;top:258.3px;width:24px;text-align:center;line-height:20px;font-size:8.2px;font-weight:400;color:#666;white-space:nowrap;letter-spacing:0.3px;text-indent:0.3px">9</div>
<div style="position:absolute;left:552.0px;top:258.3px;width:24px;text-align:center;line-height:20px;font-size:8.2px;font-weight:400;color:#666;white-space:nowrap;letter-spacing:0.3px;text-indent:0.3px">10</div>
<div style="position:absolute;left:576.0px;top:258.3px;width:24px;text-align:center;line-height:20px;font-size:8.2px;font-weight:400;color:#666;white-space:nowrap;letter-spacing:0.3px;text-indent:0.3px">11</div>
<div style="position:absolute;left:610px;top:90.5px;width:175.5px;height:26px;box-sizing:border-box;border:1px solid #ededed;border-radius:6px;background:#fff"></div>
<svg style="position:absolute;left:619px;top:98px;" width="8" height="10" viewBox="0 0 8 10"><path d="M5.6 1.6 L2.4 5 L5.6 8.4" fill="none" stroke="#222" stroke-width="1.1"/></svg>
<svg style="position:absolute;left:767.5px;top:98px;" width="8" height="10" viewBox="0 0 8 10"><path d="M2.4 1.6 L5.6 5 L2.4 8.4" fill="none" stroke="#222" stroke-width="1.1"/></svg>
<div style="position:absolute;left:646.3px;top:93.6px;width:40px;text-align:center;line-height:20px;font-size:7.5px;font-weight:400;color:#1e1e1e;white-space:nowrap;letter-spacing:0.7px;-webkit-text-stroke:0.28px #1e1e1e">SEP</div>
<div style="position:absolute;left:709.0px;top:93.6px;width:40px;text-align:center;line-height:20px;font-size:7.6px;font-weight:400;color:#1e1e1e;white-space:nowrap;letter-spacing:0.7px;-webkit-text-stroke:0.28px #1e1e1e">2025</div>
<div style="position:absolute;left:610.0px;top:118.1px;width:30px;text-align:center;line-height:20px;font-size:8.1px;font-weight:400;color:#333;white-space:nowrap;;-webkit-text-stroke:0.2px #333">Sun</div>
<div style="position:absolute;left:634.0px;top:118.1px;width:30px;text-align:center;line-height:20px;font-size:8.1px;font-weight:400;color:#333;white-space:nowrap;;-webkit-text-stroke:0.2px #333">Mon</div>
<div style="position:absolute;left:658.0px;top:118.1px;width:30px;text-align:center;line-height:20px;font-size:8.1px;font-weight:400;color:#333;white-space:nowrap;;-webkit-text-stroke:0.2px #333">Tue</div>
<div style="position:absolute;left:682.0px;top:118.1px;width:30px;text-align:center;line-height:20px;font-size:8.1px;font-weight:400;color:#333;white-space:nowrap;;-webkit-text-stroke:0.2px #333">Wed</div>
<div style="position:absolute;left:706.0px;top:118.1px;width:30px;text-align:center;line-height:20px;font-size:8.1px;font-weight:400;color:#333;white-space:nowrap;;-webkit-text-stroke:0.2px #333">Thu</div>
<div style="position:absolute;left:730.0px;top:118.1px;width:30px;text-align:center;line-height:20px;font-size:8.1px;font-weight:400;color:#333;white-space:nowrap;;-webkit-text-stroke:0.2px #333">Fri</div>
<div style="position:absolute;left:754.0px;top:118.1px;width:30px;text-align:center;line-height:20px;font-size:8.1px;font-weight:400;color:#333;white-space:nowrap;;-webkit-text-stroke:0.2px #333">Sat</div>
<div style="position:absolute;left:613px;top:137.1px;width:168px;height:1.5px;background:#f3f3f3"></div>
<div style="position:absolute;left:661px;top:140.2px;width:120px;height:21.8px;background:#ece4f8"></div>
<div style="position:absolute;left:637px;top:140.2px;width:22.2px;height:21.8px;background:#5605b6;border-radius:11px 0 0 11px"></div>
<div style="position:absolute;left:613.0px;top:142.0px;width:24px;text-align:center;line-height:20px;font-size:8.2px;font-weight:400;color:#666;white-space:nowrap;letter-spacing:0.3px;text-indent:0.3px">31</div>
<div style="position:absolute;left:637.0px;top:142.0px;width:24px;text-align:center;line-height:20px;font-size:8.2px;font-weight:700;color:#fff;white-space:nowrap;letter-spacing:0.3px;text-indent:0.3px">1</div>
<div style="position:absolute;left:661.0px;top:142.0px;width:24px;text-align:center;line-height:20px;font-size:8.2px;font-weight:700;color:#1a1a1a;white-space:nowrap;letter-spacing:0.3px;text-indent:0.3px">2</div>
<div style="position:absolute;left:685.0px;top:142.0px;width:24px;text-align:center;line-height:20px;font-size:8.2px;font-weight:700;color:#1a1a1a;white-space:nowrap;letter-spacing:0.3px;text-indent:0.3px">3</div>
<div style="position:absolute;left:709.0px;top:142.0px;width:24px;text-align:center;line-height:20px;font-size:8.2px;font-weight:700;color:#1a1a1a;white-space:nowrap;letter-spacing:0.3px;text-indent:0.3px">4</div>
<div style="position:absolute;left:733.0px;top:142.0px;width:24px;text-align:center;line-height:20px;font-size:8.2px;font-weight:700;color:#1a1a1a;white-space:nowrap;letter-spacing:0.3px;text-indent:0.3px">5</div>
<div style="position:absolute;left:757.0px;top:142.0px;width:24px;text-align:center;line-height:20px;font-size:8.2px;font-weight:700;color:#1a1a1a;white-space:nowrap;letter-spacing:0.3px;text-indent:0.3px">6</div>
<div style="position:absolute;left:613px;top:163.6px;width:168px;height:21.8px;background:#ece4f8"></div>
<div style="position:absolute;left:613.0px;top:165.4px;width:24px;text-align:center;line-height:20px;font-size:8.2px;font-weight:700;color:#1a1a1a;white-space:nowrap;letter-spacing:0.3px;text-indent:0.3px">7</div>
<div style="position:absolute;left:637.0px;top:165.4px;width:24px;text-align:center;line-height:20px;font-size:8.2px;font-weight:700;color:#1a1a1a;white-space:nowrap;letter-spacing:0.3px;text-indent:0.3px">8</div>
<div style="position:absolute;left:661.0px;top:165.4px;width:24px;text-align:center;line-height:20px;font-size:8.2px;font-weight:700;color:#1a1a1a;white-space:nowrap;letter-spacing:0.3px;text-indent:0.3px">9</div>
<div style="position:absolute;left:685.0px;top:165.4px;width:24px;text-align:center;line-height:20px;font-size:8.2px;font-weight:700;color:#1a1a1a;white-space:nowrap;letter-spacing:0.3px;text-indent:0.3px">10</div>
<div style="position:absolute;left:709.0px;top:165.4px;width:24px;text-align:center;line-height:20px;font-size:8.2px;font-weight:700;color:#1a1a1a;white-space:nowrap;letter-spacing:0.3px;text-indent:0.3px">11</div>
<div style="position:absolute;left:733.0px;top:165.4px;width:24px;text-align:center;line-height:20px;font-size:8.2px;font-weight:700;color:#1a1a1a;white-space:nowrap;letter-spacing:0.3px;text-indent:0.3px">12</div>
<div style="position:absolute;left:757.0px;top:165.4px;width:24px;text-align:center;line-height:20px;font-size:8.2px;font-weight:700;color:#1a1a1a;white-space:nowrap;letter-spacing:0.3px;text-indent:0.3px">13</div>
<div style="position:absolute;left:613px;top:187px;width:168px;height:21.8px;background:#ece4f8"></div>
<div style="position:absolute;left:613.0px;top:188.8px;width:24px;text-align:center;line-height:20px;font-size:8.2px;font-weight:700;color:#1a1a1a;white-space:nowrap;letter-spacing:0.3px;text-indent:0.3px">14</div>
<div style="position:absolute;left:637.0px;top:188.8px;width:24px;text-align:center;line-height:20px;font-size:8.2px;font-weight:700;color:#1a1a1a;white-space:nowrap;letter-spacing:0.3px;text-indent:0.3px">15</div>
<div style="position:absolute;left:661.0px;top:188.8px;width:24px;text-align:center;line-height:20px;font-size:8.2px;font-weight:700;color:#1a1a1a;white-space:nowrap;letter-spacing:0.3px;text-indent:0.3px">16</div>
<div style="position:absolute;left:685.0px;top:188.8px;width:24px;text-align:center;line-height:20px;font-size:8.2px;font-weight:700;color:#1a1a1a;white-space:nowrap;letter-spacing:0.3px;text-indent:0.3px">17</div>
<div style="position:absolute;left:709.0px;top:188.8px;width:24px;text-align:center;line-height:20px;font-size:8.2px;font-weight:700;color:#1a1a1a;white-space:nowrap;letter-spacing:0.3px;text-indent:0.3px">18</div>
<div style="position:absolute;left:733.0px;top:188.8px;width:24px;text-align:center;line-height:20px;font-size:8.2px;font-weight:700;color:#1a1a1a;white-space:nowrap;letter-spacing:0.3px;text-indent:0.3px">19</div>
<div style="position:absolute;left:757.0px;top:188.8px;width:24px;text-align:center;line-height:20px;font-size:8.2px;font-weight:700;color:#1a1a1a;white-space:nowrap;letter-spacing:0.3px;text-indent:0.3px">20</div>
<div style="position:absolute;left:613px;top:210.4px;width:168px;height:21.8px;background:#ece4f8"></div>
<div style="position:absolute;left:613.0px;top:212.20000000000002px;width:24px;text-align:center;line-height:20px;font-size:8.2px;font-weight:700;color:#1a1a1a;white-space:nowrap;letter-spacing:0.3px;text-indent:0.3px">21</div>
<div style="position:absolute;left:637.0px;top:212.20000000000002px;width:24px;text-align:center;line-height:20px;font-size:8.2px;font-weight:700;color:#1a1a1a;white-space:nowrap;letter-spacing:0.3px;text-indent:0.3px">22</div>
<div style="position:absolute;left:661.0px;top:212.20000000000002px;width:24px;text-align:center;line-height:20px;font-size:8.2px;font-weight:700;color:#1a1a1a;white-space:nowrap;letter-spacing:0.3px;text-indent:0.3px">23</div>
<div style="position:absolute;left:685.0px;top:212.20000000000002px;width:24px;text-align:center;line-height:20px;font-size:8.2px;font-weight:700;color:#1a1a1a;white-space:nowrap;letter-spacing:0.3px;text-indent:0.3px">24</div>
<div style="position:absolute;left:709.0px;top:212.20000000000002px;width:24px;text-align:center;line-height:20px;font-size:8.2px;font-weight:700;color:#1a1a1a;white-space:nowrap;letter-spacing:0.3px;text-indent:0.3px">25</div>
<div style="position:absolute;left:733.0px;top:212.20000000000002px;width:24px;text-align:center;line-height:20px;font-size:8.2px;font-weight:700;color:#1a1a1a;white-space:nowrap;letter-spacing:0.3px;text-indent:0.3px">26</div>
<div style="position:absolute;left:757.0px;top:212.20000000000002px;width:24px;text-align:center;line-height:20px;font-size:8.2px;font-weight:700;color:#1a1a1a;white-space:nowrap;letter-spacing:0.3px;text-indent:0.3px">27</div>
<div style="position:absolute;left:613px;top:233.3px;width:48px;height:21.8px;background:#ece4f8"></div>
<div style="position:absolute;left:661px;top:233.3px;width:22.5px;height:21.8px;background:#5605b6;border-radius:0 11px 11px 0"></div>
<div style="position:absolute;left:613.0px;top:235.10000000000002px;width:24px;text-align:center;line-height:20px;font-size:8.2px;font-weight:700;color:#1a1a1a;white-space:nowrap;letter-spacing:0.3px;text-indent:0.3px">28</div>
<div style="position:absolute;left:637.0px;top:235.10000000000002px;width:24px;text-align:center;line-height:20px;font-size:8.2px;font-weight:700;color:#1a1a1a;white-space:nowrap;letter-spacing:0.3px;text-indent:0.3px">29</div>
<div style="position:absolute;left:661.0px;top:235.10000000000002px;width:24px;text-align:center;line-height:20px;font-size:8.2px;font-weight:700;color:#fff;white-space:nowrap;letter-spacing:0.3px;text-indent:0.3px">30</div>
<div style="position:absolute;left:685.0px;top:235.10000000000002px;width:24px;text-align:center;line-height:20px;font-size:8.2px;font-weight:400;color:#666;white-space:nowrap;letter-spacing:0.3px;text-indent:0.3px">1</div>
<div style="position:absolute;left:709.0px;top:235.10000000000002px;width:24px;text-align:center;line-height:20px;font-size:8.2px;font-weight:400;color:#666;white-space:nowrap;letter-spacing:0.3px;text-indent:0.3px">2</div>
<div style="position:absolute;left:733.0px;top:235.10000000000002px;width:24px;text-align:center;line-height:20px;font-size:8.2px;font-weight:400;color:#666;white-space:nowrap;letter-spacing:0.3px;text-indent:0.3px">3</div>
<div style="position:absolute;left:757.0px;top:235.10000000000002px;width:24px;text-align:center;line-height:20px;font-size:8.2px;font-weight:400;color:#666;white-space:nowrap;letter-spacing:0.3px;text-indent:0.3px">4</div>
<div style="position:absolute;left:613.0px;top:258.3px;width:24px;text-align:center;line-height:20px;font-size:8.2px;font-weight:400;color:#666;white-space:nowrap;letter-spacing:0.3px;text-indent:0.3px">5</div>
<div style="position:absolute;left:637.0px;top:258.3px;width:24px;text-align:center;line-height:20px;font-size:8.2px;font-weight:400;color:#666;white-space:nowrap;letter-spacing:0.3px;text-indent:0.3px">6</div>
<div style="position:absolute;left:661.0px;top:258.3px;width:24px;text-align:center;line-height:20px;font-size:8.2px;font-weight:400;color:#666;white-space:nowrap;letter-spacing:0.3px;text-indent:0.3px">7</div>
<div style="position:absolute;left:685.0px;top:258.3px;width:24px;text-align:center;line-height:20px;font-size:8.2px;font-weight:400;color:#666;white-space:nowrap;letter-spacing:0.3px;text-indent:0.3px">8</div>
<div style="position:absolute;left:709.0px;top:258.3px;width:24px;text-align:center;line-height:20px;font-size:8.2px;font-weight:400;color:#666;white-space:nowrap;letter-spacing:0.3px;text-indent:0.3px">9</div>
<div style="position:absolute;left:733.0px;top:258.3px;width:24px;text-align:center;line-height:20px;font-size:8.2px;font-weight:400;color:#666;white-space:nowrap;letter-spacing:0.3px;text-indent:0.3px">10</div>
<div style="position:absolute;left:757.0px;top:258.3px;width:24px;text-align:center;line-height:20px;font-size:8.2px;font-weight:400;color:#666;white-space:nowrap;letter-spacing:0.3px;text-indent:0.3px">11</div>
<div style="position:absolute;left:327px;top:349px;width:466px;height:1px;background:#ececec"></div>
<div style="position:absolute;left:683px;top:354.3px;width:50px;height:28.5px;box-sizing:border-box;border:1.9px solid #5212b0;border-radius:15px;background:#fff"></div>
<div style="position:absolute;left:683.0px;top:358.5px;width:50px;text-align:center;line-height:20px;font-size:8.2px;font-weight:700;color:#5209b3;white-space:nowrap;">Cancel</div>
<div style="position:absolute;left:738px;top:354.3px;width:53.5px;height:28.5px;background:#f2eefb;border-radius:15px"></div>
<div style="position:absolute;left:739.5px;top:358.5px;width:50px;text-align:center;line-height:20px;font-size:8.1px;font-weight:700;color:#a788e0;white-space:nowrap;">Apply</div>
</body></html>
